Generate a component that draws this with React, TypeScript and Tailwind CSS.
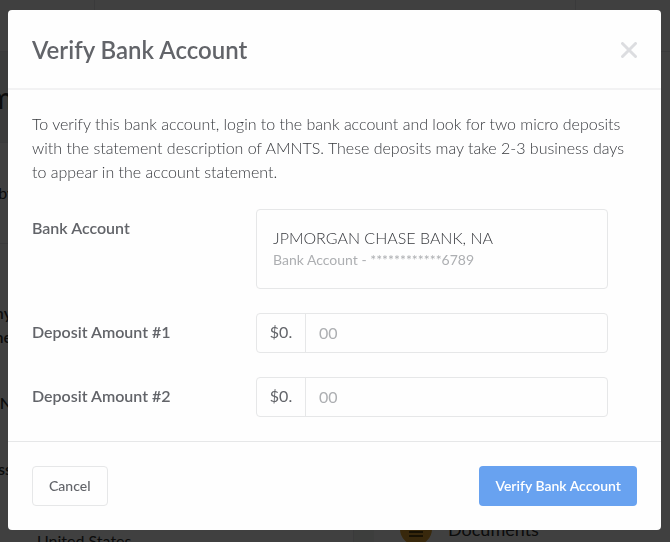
import type { ReactNode } from "react";

function CompanyPage() {
  return (
    <div aria-hidden="true" className="h-screen overflow-hidden bg-[#f2f5f4] text-[#333]">
      <div className="flex h-[52px] border-b border-gray-200 bg-white">
        <div className="w-[95px] border-r border-gray-200" />
        <div className="w-[481px] border-r border-gray-200" />
      </div>
      <div className="-ml-[60px] flex items-start">
        <section className="w-[414px] shrink-0 border-r border-gray-200 bg-white">
          <h2 className="flex h-[91px] items-center justify-end border-b border-gray-200 bg-[#ecf0ee] pr-[276px] text-3xl font-medium">
            Company
          </h2>
          <p className="flex h-[101px] items-center border-b border-gray-200 pl-10 text-base">
            Baby's Demo Company
          </p>
          <dl className="grid grid-cols-[72px_1fr] gap-x-[25px] pt-[57px] text-base leading-6">
            <dt className="h-[90px] text-right font-semibold">
              Company
              <br />
              Name
            </dt>
            <dd>Baby's Demo</dd>
            <dt className="h-[66px] text-right font-semibold">EIN</dt>
            <dd>12-3456789</dd>
            <dt className="text-right font-semibold">Address</dt>
            <dd>
              123 Fake Street
              <br />
              Houston, Texas
              <br />
              77003
              <br />
              United States
            </dd>
          </dl>
        </section>
        <ul className="ml-5 flex-1 bg-white pt-[74px] text-lg">
          {[
            ["Benefits", "bg-gray-300"],
            ["COVID Tracking", "bg-red-200"],
            ["Team Feedback", "bg-blue-200"],
            ["Documents", "bg-[#e0a030]"],
          ].map(([name, tint]) => (
            <li key={name} className="flex h-[115px] items-center gap-4 pl-[26px]">
              <span className={`flex size-8 items-center justify-center rounded-full ${tint}`}>
                <svg viewBox="0 0 16 16" className="size-4" fill="none" stroke="#5c4310" strokeWidth="2">
                  <path d="M1 3h14M1 7h14M1 11h14M1 15h14" />
                </svg>
              </span>
              {name}
            </li>
          ))}
        </ul>
      </div>
    </div>
  );
}

function Row({ label, htmlFor, children }: { label: string; htmlFor: string; children: ReactNode }) {
  return (
    <div className="flex items-start">
      <label htmlFor={htmlFor} className="w-56 shrink-0 py-[7px] text-base leading-6 font-semibold">
        {label}
      </label>
      <div className="mr-[29px] min-w-0 flex-1">{children}</div>
    </div>
  );
}

function AmountField({ id, label }: { id: string; label: string }) {
  return (
    <Row label={label} htmlFor={id}>
      <div className="flex h-10 overflow-hidden rounded-sm border border-[#e6e7e8]">
        <span className="flex w-12 shrink-0 items-center justify-center pb-0.5 text-base">$0.</span>
        <input
          id={id}
          type="text"
          inputMode="numeric"
          placeholder="00"
          className="min-w-0 flex-1 border-l border-[#e6e7e8] px-[13px] text-base outline-none placeholder:text-[#adafb2]"
        />
      </div>
    </Row>
  );
}

export default function App() {
  return (
    <div className="font-['Lato',sans-serif]">
      <CompanyPage />
      <div className="fixed inset-0 overflow-hidden bg-black/75 pt-[10px] pr-[9px] pl-2">
        <div
          role="dialog"
          aria-modal="true"
          aria-labelledby="verify-title"
          className="rounded-[4px] bg-white/[0.995] text-[#626469]"
        >
          <header className="flex items-center justify-between border-b-2 border-[#f2f2f3] px-6 pt-6 pb-[22px]">
            <h1 id="verify-title" className="text-2xl leading-8 font-semibold">
              Verify Bank Account
            </h1>
            <button type="button" aria-label="Close" className="text-[#dcdde0]">
              <svg viewBox="0 0 16 16" className="size-4" fill="none" stroke="currentColor" strokeWidth="3" strokeLinecap="round">
                <path d="M1.5 1.5l13 13M14.5 1.5l-13 13" />
              </svg>
            </button>
          </header>

          <form onSubmit={(e) => e.preventDefault()}>
            <div className="space-y-6 px-6 pt-[22px] pb-6">
              <p className="pb-px text-base leading-6 font-light text-[#36383d]">
                To verify this bank account, login to the bank account and look for two micro deposits with the
                statement description of AMNTS. These deposits may take 2-3 business days to appear in the account
                statement.
              </p>
              <Row label="Bank Account" htmlFor="bank-account">
                <output
                  id="bank-account"
                  className="flex h-20 flex-col justify-center rounded-sm border border-[#e6e7e8] px-4 pb-0.5"
                >
                  <span className="text-base leading-6 font-light text-[#36383d]">JPMORGAN CHASE BANK, NA</span>
                  <span className="text-sm leading-5 text-[#adafb2]">Bank Account - ************6789</span>
                </output>
              </Row>
              <AmountField id="deposit-1" label="Deposit Amount #1" />
              <AmountField id="deposit-2" label="Deposit Amount #2" />
            </div>

            <footer className="flex items-center justify-between border-t border-[#e6e7e8] p-6">
              <button type="button" className="h-10 rounded-sm border border-[#e6e7e8] px-4 text-sm font-medium">
                Cancel
              </button>
              <button type="submit" className="h-10 rounded-sm bg-[#68a2f0] px-4 text-sm font-semibold text-white">
                Verify Bank Account
              </button>
            </footer>
          </form>
        </div>
      </div>
    </div>
  );
}
